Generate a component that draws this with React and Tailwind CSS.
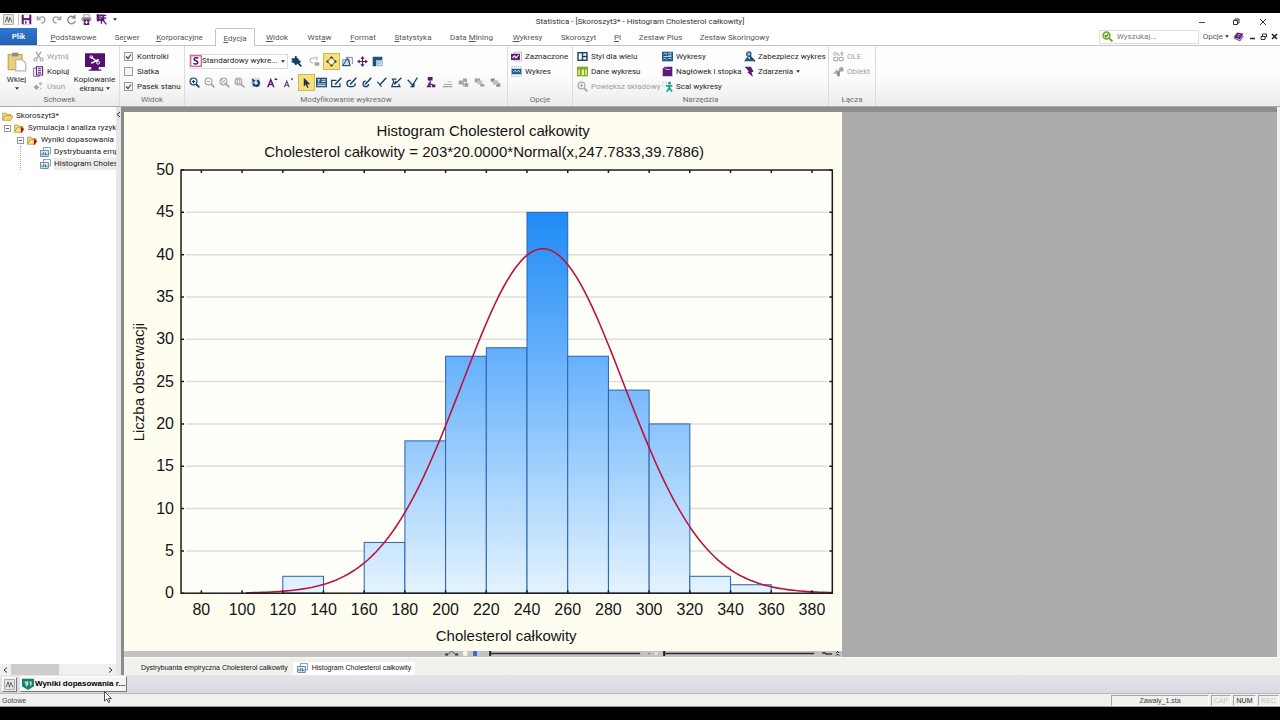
import React from "react";

/* ---------- icons ---------- */

const NAVY = "#123f66";
const PURPLE = "#5b1a73";
const GREY = "#a3a3a3";

function Icon({ children, className = "size-3" }) {
  return (
    <svg viewBox="0 0 16 16" fill="none" className={`${className} shrink-0`} aria-hidden="true">
      {children}
    </svg>
  );
}

const AppIcon = (p) => (
  <Icon {...p}>
    <rect x="1" y="1" width="14" height="14" fill="#e9e9e9" stroke="#8b8b8b" />
    <path d="M3 12L6 4l2 8M8 12l2-7 2 4 1 3" stroke="#555" strokeWidth="1.3" />
  </Icon>
);
const SaveIcon = (p) => (
  <Icon {...p}>
    <path d="M1 1h14v14H1z" fill={PURPLE} />
    <path d="M4 1h8v5H4z" fill="#fff" />
    <path d="M4 9h8v6H4z" fill="#fff" />
    <path d="M6 10h2v4H6z" fill={PURPLE} />
  </Icon>
);
const UndoIcon = (p) => (
  <Icon {...p}>
    <path d="M2 3v5h5M2.500 7.500C5 3 13 3 13 8.500c0 3-3 4.500-5 5" stroke={GREY} strokeWidth="2" />
  </Icon>
);
const RedoIcon = (p) => (
  <Icon {...p}>
    <path d="M14 3v5H9M13.500 7.500C11 3 3 3 3 8.500c0 3 3 4.500 5 5" stroke={GREY} strokeWidth="2" />
  </Icon>
);
const RefreshIcon = (p) => (
  <Icon {...p}>
    <path d="M12.500 5.500A5.500 5.500 0 1 0 13.500 10M13 1v5H8" stroke="#8b8b8b" strokeWidth="2" />
  </Icon>
);
const PrintAddIcon = (p) => (
  <Icon {...p}>
    <path d="M4 1h8v4H4z" stroke={GREY} strokeWidth="1.500" />
    <path d="M1 5h14v5H1z" fill="#9a8aa0" />
    <path d="M4 8h8v8H4z" fill={PURPLE} />
    <path d="M8 9.500v5M5.500 12h5" stroke="#fff" strokeWidth="1.500" />
  </Icon>
);
const SelectDocIcon = (p) => (
  <Icon {...p}>
    <path d="M1 1h11v9H1z" fill={PURPLE} />
    <path d="M8 6l7 9M8 6v8M8 6h7M1 2h14M3 0v11" stroke={PURPLE} strokeWidth="2" />
    <path d="M5 4h5M5 6.500h2" stroke="#fff" />
  </Icon>
);
const PasteIcon = (p) => (
  <Icon {...p}>
    <path d="M1 2h11v12H1z" fill="#e9cf7c" stroke="#c9a94e" />
    <path d="M4 .500h5v3H4z" fill="#8d8d8d" />
    <path d="M7 6h5l3 3v6H7z" fill="#fff" stroke="#b5b5b5" />
  </Icon>
);
const CutIcon = (p) => (
  <Icon {...p}>
    <path d="M4 1l7 10M12 1L5 11" stroke={GREY} strokeWidth="1.800" />
    <circle cx="3.500" cy="12.500" r="2.200" stroke={GREY} strokeWidth="1.500" />
    <circle cx="12.500" cy="12.500" r="2.200" stroke={GREY} strokeWidth="1.500" />
  </Icon>
);
const CopyIcon = (p) => (
  <Icon {...p}>
    <path d="M1 3h8v12H1z" fill="#fff" stroke={PURPLE} />
    <path d="M5 1h9v12H5z" fill="#fff" stroke={PURPLE} strokeWidth="1.500" />
    <path d="M7 4h5M7 7h5M7 10h5" stroke={PURPLE} strokeWidth="1.500" />
  </Icon>
);
const DeleteIcon = (p) => (
  <Icon {...p}>
    <path d="M5 5l4 4-4 4-4-4z" fill={GREY} />
    <path d="M11 1l3 3-3 3-3-3z" fill="#bdbdbd" />
    <path d="M10 10l2 2M12 10l-2 2" stroke={GREY} />
  </Icon>
);
const ScreenIcon = (p) => (
  <Icon {...p}>
    <path d="M0 1h16v11H0z" fill="#571070" />
    <path d="M5 12h6v2h2v1H3v-1h2z" fill="#571070" />
    <path d="M5 4l5 4M5 9l6-3" stroke="#fff" strokeWidth="1.200" />
    <circle cx="5" cy="4" r="1" stroke="#fff" strokeWidth="0.800" />
    <circle cx="10.500" cy="8.500" r="1.200" stroke="#fff" strokeWidth="0.800" />
  </Icon>
);
const StyleSIcon = (p) => (
  <Icon {...p}>
    <rect x="1" y="1" width="14" height="14" fill="#fff" stroke="#d0457c" strokeWidth="1.500" />
    <path d="M11 4.500C9 3 5 3.500 5.500 6c.4 2 5 1.500 5 4 0 2.500-4 2.700-6 1" stroke="#3a1d8a" strokeWidth="2" />
  </Icon>
);
const BrushIcon = (p) => (
  <Icon {...p}>
    <circle cx="7" cy="7" r="4.500" fill={NAVY} />
    <path d="M1 4l12 6M7 0v13M1 8h13M9 9l6 6" stroke={NAVY} strokeWidth="2.600" />
  </Icon>
);
const RotateGreyIcon = (p) => (
  <Icon {...p}>
    <path d="M10 3H5a3 3 0 0 0 0 7h1M10 1l3 2.500L10 6" stroke={GREY} strokeWidth="1.400" />
    <rect x="8" y="9" width="7" height="5" rx="1" fill={GREY} />
  </Icon>
);
const FitIcon = (p) => (
  <Icon {...p}>
    <circle cx="8" cy="8" r="4.500" fill="#fff8cf" stroke="#6d6740" strokeWidth="1.400" />
    <path d="M8 0l2.500 3h-5zM8 16l2.500-3h-5zM0 8l3-2.500v5zM16 8l-3-2.500v5z" fill="#3b3b2b" />
  </Icon>
);
const ShapeIcon = (p) => (
  <Icon {...p}>
    <path d="M5 2h10v10" stroke="#5d7a94" strokeWidth="1.300" />
    <path d="M1 5h10v9H1z" fill="#cfd9e3" stroke="#5d7a94" />
    <path d="M1 14L8 3l4 11z" stroke={NAVY} strokeWidth="1.400" />
  </Icon>
);
const MoveIcon = (p) => (
  <Icon {...p}>
    <path d="M8 2v12M2 8h12" stroke={PURPLE} strokeWidth="1.800" />
    <path d="M8 0l3 4H5zM8 16l3-4H5zM0 8l4-3v6zM16 8l-4-3v6z" fill={PURPLE} />
  </Icon>
);
const LayoutIcon = (p) => (
  <Icon {...p}>
    <path d="M1 1h14v5H6v9H1z" fill="#1d527a" />
    <path d="M7 7h8v7H7z" fill="#d6e2ee" stroke="#7b93ab" />
    <path d="M8 9l2 3 4-4" stroke="#7b93ab" />
  </Icon>
);
function ZoomGlyph({ color, inner, ...p }) {
  return (
    <Icon {...p}>
      <circle cx="6.500" cy="6.500" r="5" stroke={color} strokeWidth="1.600" />
      <path d="M10 10l5 5" stroke={color} strokeWidth="2.400" />
      <path d={inner} stroke={color} strokeWidth="1.500" />
    </Icon>
  );
}
const ZoomInIcon = (p) => <ZoomGlyph color={NAVY} inner="M6.500 4v5M4 6.500h5" {...p} />;
const ZoomOutIcon = (p) => <ZoomGlyph color={GREY} inner="M4 6.500h5" {...p} />;
const ZoomFitIcon = (p) => <ZoomGlyph color={GREY} inner="M4 5.500V4h1.500M7.500 9H9V7.500M4 9l5-5" {...p} />;
const ZoomPageIcon = (p) => <ZoomGlyph color={GREY} inner="M4.500 4h4v5h-4z" {...p} />;
const ZoomPlusGreyIcon = (p) => <ZoomGlyph color={GREY} inner="M6.500 4v5M4 6.500h5" {...p} />;
const RotateIcon = (p) => (
  <Icon {...p}>
    <rect x="1" y="1" width="14" height="14" fill="#dce4ea" />
    <path d="M10 5a4 4 0 1 1-5 4" stroke={NAVY} strokeWidth="3" />
    <path d="M3 2l5 3-4 4z" fill={NAVY} />
  </Icon>
);
const FontUpIcon = (p) => (
  <Icon {...p}>
    <path d="M1 15L5.500 4 10 15M3 11h5" stroke={PURPLE} strokeWidth="2.200" />
    <path d="M13 1l2.500 3.500h-5z" fill={PURPLE} />
  </Icon>
);
const FontDownIcon = (p) => (
  <Icon {...p}>
    <path d="M2 15L5.500 6 9 15M3.500 12h4" stroke="#5d4a66" strokeWidth="1.600" />
    <path d="M13 5l2-3h-4z" fill={PURPLE} />
  </Icon>
);
const ArrowIcon = (p) => (
  <Icon {...p}>
    <path d="M4 1v13l3-3 2 5 2-1-2-4.500h4.500z" fill="#23354a" />
  </Icon>
);
const TextBoxIcon = (p) => (
  <Icon {...p}>
    <path d="M0 1h16v14H0z" fill="#1d527a" />
    <path d="M2 4h4M4 4v4M8 4h6M8 6.500h6M2 10h12M2 12.500h12" stroke="#fff" strokeWidth="1.200" />
  </Icon>
);
const PenRectIcon = (p) => (
  <Icon {...p}>
    <path d="M8 5H1v9h12V9" stroke={NAVY} strokeWidth="1.800" />
    <path d="M6 11l9-10" stroke={NAVY} strokeWidth="2.200" />
  </Icon>
);
const PenRoundIcon = (p) => (
  <Icon {...p}>
    <path d="M7 5H5c-5 1-5 9 1 9h3c4 0 5-3 4-5" stroke={NAVY} strokeWidth="1.800" />
    <path d="M6 11l9-10" stroke={NAVY} strokeWidth="2.200" />
  </Icon>
);
const PenCircleIcon = (p) => (
  <Icon {...p}>
    <path d="M7 6a4 4 0 1 0 4 4" stroke={NAVY} strokeWidth="1.800" />
    <path d="M6 11l9-10" stroke={NAVY} strokeWidth="2.200" />
  </Icon>
);
const PenLineIcon = (p) => (
  <Icon {...p}>
    <path d="M2 7l6 7" stroke={NAVY} strokeWidth="1.800" />
    <path d="M6 11l9-10" stroke={NAVY} strokeWidth="2" />
  </Icon>
);
const PenPolyIcon = (p) => (
  <Icon {...p}>
    <path d="M8 3L2 3l2 4-3 7h12l-2-4" stroke={NAVY} strokeWidth="1.700" />
    <path d="M6 10l9-9M5 11l2-5" stroke={NAVY} strokeWidth="2" />
  </Icon>
);
const PenArrowIcon = (p) => (
  <Icon {...p}>
    <path d="M1 4l7 8 7-11" stroke={NAVY} strokeWidth="1.800" />
    <path d="M4 15h7V9z" fill={NAVY} />
  </Icon>
);
const NodeIcon = (p) => (
  <Icon {...p}>
    <path d="M4 0h7v5H4zM2 15l3-5h2l2 5zM10 11h5v4h-5z" fill={PURPLE} />
    <path d="M7.500 5v5M5 9l7 3" stroke={PURPLE} strokeWidth="1.800" />
  </Icon>
);
const AlignGreyIcon = (p) => (
  <Icon {...p}>
    <path d="M1 14h14M3 11h12" stroke={GREY} strokeWidth="1.600" />
    <path d="M8 6h6v2H8z" fill="#cfcfcf" />
  </Icon>
);
const GroupGreyIcon = (p) => (
  <Icon {...p}>
    <path d="M1 5h6v6H1zM8 2h5v5H8zM9 9h6v5H9z" fill={GREY} />
    <path d="M8 2v12M12 5v9" stroke="#8b8b8b" />
  </Icon>
);
const FrontGreyIcon = (p) => (
  <Icon {...p}>
    <path d="M1 2h8v6H1z" fill={GREY} />
    <path d="M5 5h7v6H5z" fill="#c4c4c4" />
    <path d="M9 10h6v4H9z" fill={GREY} />
  </Icon>
);
const BackGreyIcon = (p) => (
  <Icon {...p}>
    <path d="M1 2h6v5H1zM9 9h6v5H9z" fill="#8f8f8f" />
    <path d="M4 5h8v6H4z" fill="#bcbcbc" />
  </Icon>
);
const SelectedIcon = (p) => (
  <Icon {...p}>
    <rect x="4.500" y="1.500" width="11" height="13" stroke="#b79ac4" />
    <path d="M0 4h13v9H0z" fill={PURPLE} />
    <path d="M2 10l3-3 2 3 4-4" stroke="#fff" strokeWidth="1.600" />
  </Icon>
);
const GraphAllIcon = (p) => (
  <Icon {...p}>
    <rect x="1" y="1" width="14" height="14" stroke="#8aa8c0" strokeDasharray="2 1" />
    <path d="M1 4h14v8H1z" fill="#205b86" />
    <path d="M3 9l3-3 2 3 3-3 2 3" stroke="#fff" />
  </Icon>
);
const MultiStyleIcon = (p) => (
  <Icon {...p}>
    <rect x="1.500" y="2.500" width="13" height="11" fill="#fff" stroke={NAVY} strokeWidth="2" />
    <path d="M8 2v12M8 8h7" stroke={NAVY} strokeWidth="2" />
  </Icon>
);
const DataIcon = (p) => (
  <Icon {...p}>
    <path d="M0 1h16v14H0z" fill="#83ac1c" />
    <path d="M2 5h2v8H2zM7 5h3v8H7zM12 5h2v8h-2z" fill="#eef5d4" />
  </Icon>
);
const GraphsIcon = (p) => (
  <Icon {...p}>
    <path d="M0 1h16v14H0z" fill="#205b86" />
    <path d="M2 5l2-2 2 2 1-2M9 3h5M9 6h5M2 8h12M9 11h5M2 12l2-2 3 3" stroke="#dbe8f2" strokeWidth="1.200" />
  </Icon>
);
const HeaderIcon = (p) => (
  <Icon {...p}>
    <path d="M4 1h11v14H1V4z" fill={PURPLE} />
    <path d="M4 4l2-2M5 5h7" stroke="#fff" />
  </Icon>
);
const MergeIcon = (p) => (
  <Icon {...p}>
    <rect x=".500" y="1.500" width="6" height="6" stroke="#9fb8c8" strokeDasharray="1 1" />
    <circle cx="11" cy="3" r="2.200" fill="#1ea08a" />
    <path d="M6 7h9M10.500 6v4l-3.500 5.500M10.500 9l4 6.500" stroke="#1ea08a" strokeWidth="2.400" />
  </Icon>
);
const LockIcon = (p) => (
  <Icon {...p}>
    <circle cx="7" cy="4.500" r="3.200" fill="#9cb8d2" stroke="#205b86" strokeWidth="1.800" />
    <path d="M0 15l5-7 3 4 1-3 5 6z" fill="#205b86" />
    <path d="M8 7l8 8" stroke={NAVY} strokeWidth="2.400" />
  </Icon>
);
const EventIcon = (p) => (
  <Icon {...p}>
    <path d="M1 1h9l4 7-3 1 2 7-8-7 2-1z" fill={PURPLE} />
  </Icon>
);
const OleIcon = (p) => (
  <Icon {...p}>
    <circle cx="3" cy="4" r="2" stroke={GREY} strokeWidth="1.300" />
    <path d="M7 2v4h3M15 2h-3v4h3M12 4h3" stroke={GREY} strokeWidth="1.300" />
    <rect x="1" y="9" width="6" height="5" rx="2" stroke={GREY} strokeWidth="1.500" />
    <rect x="9" y="9" width="6" height="5" rx="2" stroke={GREY} strokeWidth="1.500" />
  </Icon>
);
const ObjectIcon = (p) => (
  <Icon {...p}>
    <path d="M0 11l6-7 3 9z" fill="#b7b7b7" />
    <circle cx="12" cy="5" r="3.500" fill={GREY} />
    <path d="M6 7h4v8H6z" fill="#8f8f8f" />
  </Icon>
);
const SearchIcon = (p) => (
  <Icon {...p}>
    <circle cx="6.500" cy="6.500" r="5" fill="#dfeec0" stroke="#74a51c" strokeWidth="2.200" />
    <path d="M10 10l5 5" stroke="#74a51c" strokeWidth="3" />
    <path d="M4 6l2 2.500L9.500 4" stroke="#4c7a10" strokeWidth="1.600" />
  </Icon>
);
const BookIcon = (p) => (
  <Icon {...p}>
    <path d="M6 2l9 2-5 8-9-3z" fill={PURPLE} />
    <path d="M1 10l9 4 5-7" stroke="#8a63a0" strokeWidth="1.800" />
    <path d="M7 5l4 1M6 7l3 1" stroke="#e4cdef" />
  </Icon>
);
const FolderIcon = (p) => (
  <Icon {...p}>
    <path d="M1 13V3h5l1 2h6v2" fill="#f6dd8d" stroke="#a98a2c" />
    <path d="M1 13.500L4 7h11.500L13 13.500z" fill="#fbd96b" stroke="#a98a2c" />
  </Icon>
);
const FolderRedIcon = (p) => (
  <Icon {...p}>
    <path d="M1 13V3h5l1 2h6v2" fill="#f6dd8d" stroke="#a98a2c" />
    <path d="M1 13.500L4 7h9L12 13.500z" fill="#fbe38f" stroke="#a98a2c" />
    <path d="M10 5l5 4-5 6z" fill="#b3121d" />
  </Icon>
);
const ChartDocIcon = (p) => (
  <Icon {...p}>
    <rect x="5" y="1" width="10" height="9" fill="#fff" stroke="#4d7896" />
    <rect x="1" y="5" width="11" height="9" fill="#e2edf5" stroke="#33627f" />
    <path d="M3 12V9M5.500 12V7M8 12V8M10 12v-2" stroke="#33627f" strokeWidth="1.400" />
  </Icon>
);
const ShieldIcon = (p) => (
  <Icon {...p}>
    <path d="M0 1h16v10l-8 5-8-5z" fill="#17806c" />
    <path d="M3 5l5-1 1 4-3 4zM10 4l3 1v4l-2 2z" fill="#a9dccf" />
  </Icon>
);

/* ---------- ribbon ---------- */

const Caret = () => (
  <svg viewBox="0 0 5 3" className="w-1 h-[3px] shrink-0" aria-hidden="true">
    <path d="M0 0h5L2.500 3z" fill="#333" />
  </svg>
);

const TABS = [
  ["", "P", "odstawowe", "w-[73px]"],
  ["Se", "r", "wer", "w-[34px]"],
  ["", "K", "orporacyjne", "w-[71px]"],
  ["", "E", "dycja", "w-[40px]", true],
  ["", "W", "idok", "w-[44px]"],
  ["Wst", "a", "w", "w-[41px]"],
  ["", "F", "ormat", "w-[46px]"],
  ["", "S", "tatystyka", "w-[54px]"],
  ["Data ", "M", "ining", "w-[63px]"],
  ["", "W", "ykresy", "w-[49px]"],
  ["Skoros", "z", "yt", "w-[53px]"],
  ["", "P", "I", "w-[25px]"],
  ["Zestaw Plus", "", "", "w-[61px]"],
  ["Zestaw Skoringowy", "", "", "w-[87px]"],
];

function Tool({ icon: I, label, muted, caret, size = "size-3" }) {
  return (
    <button
      type="button"
      disabled={muted}
      className={`flex h-[15px] items-center gap-[3px] whitespace-nowrap ${muted ? "text-[#9f9f9f]" : "text-[#262626]"}`}
    >
      <I className={size} />
      <span>{label}</span>
      {caret && <Caret />}
    </button>
  );
}

function Group({ label, width, children }) {
  return (
    <section
      aria-label={label}
      className={`flex shrink-0 flex-col border-r border-[#dcdcdc] pt-[3px] ${width}`}
    >
      <div className="flex h-[45px]">{children}</div>
      <div className="h-3 text-center leading-3 text-[#6d6d6d]">{label}</div>
    </section>
  );
}

function IconButton({ icon: I, name, active, className = "w-[15px]", muted }) {
  return (
    <button
      type="button"
      aria-label={name}
      disabled={muted}
      className={`flex h-[15px] shrink-0 items-center justify-center ${active ? "bg-[#f6e17c] outline outline-1 outline-[#cdb84c]" : ""} ${className}`}
    >
      <I className="size-[11px]" />
    </button>
  );
}

function Check({ label, on }) {
  return (
    <label className="flex h-[15px] items-center gap-1 whitespace-nowrap text-[#262626]">
      <span className="grid">
        <input
          type="checkbox"
          defaultChecked={on}
          className="peer col-start-1 row-start-1 size-[9px] appearance-none border border-[#9b9b9b] bg-[#f6f6f6]"
        />
        <svg
          viewBox="0 0 9 9"
          fill="none"
          className="pointer-events-none invisible col-start-1 row-start-1 size-[9px] peer-checked:visible"
          aria-hidden="true"
        >
          <path d="M2 4.500L4 6.500 7 2.500" stroke="#444" strokeWidth="1.200" />
        </svg>
      </span>
      {label}
    </label>
  );
}

function TitleBar() {
  const quick = [
    [SaveIcon, "Zapisz"],
    [UndoIcon, "Cofnij"],
    [RedoIcon, "Ponów"],
    [RefreshIcon, "Odśwież"],
    [PrintAddIcon, "Drukuj"],
    [SelectDocIcon, "Zaznacz"],
  ];
  return (
    <header className="grid h-[15px] shrink-0 grid-cols-[1fr_auto_1fr] items-center bg-white">
      <div className="flex items-center pb-[2px] pl-[3px]">
        <AppIcon className="size-[11px]" />
        <div className="ml-[4px] flex items-center border-l border-[#bbb]">
          {quick.map(([I, name]) => (
            <button key={name} type="button" aria-label={name} className="flex w-[15px] justify-center">
              <I className="size-[11px]" />
            </button>
          ))}
        </div>
        <button type="button" aria-label="Dostosuj pasek" className="ml-1 flex">
          <Caret />
        </button>
      </div>
      <h1 className="whitespace-nowrap pt-[3px] text-[#333]">
        Statistica - [Skoroszyt3* - Histogram Cholesterol całkowity]
      </h1>
      <div className="flex items-center justify-end gap-[19px] pr-[13px] pt-[3px]">
        <button type="button" aria-label="Minimalizuj">
          <svg viewBox="0 0 8 8" fill="none" className="size-2">
            <path d="M1 4.500h6" stroke="#444" />
          </svg>
        </button>
        <button type="button" aria-label="Przywróć" className="ml-[7px]">
          <svg viewBox="0 0 8 8" fill="none" className="size-2">
            <path d="M1.500 2.500h4v4h-4zM3 2V1h4v4H6" stroke="#333" />
          </svg>
        </button>
        <button type="button" aria-label="Zamknij">
          <svg viewBox="0 0 8 8" fill="none" className="size-2">
            <path d="M1 1l6 6M7 1L1 7" stroke="#333" />
          </svg>
        </button>
      </div>
    </header>
  );
}

function TabBar() {
  return (
    <nav className="flex h-[18px] shrink-0 items-stretch border-b border-[#c4c4c4] bg-white text-[#555]">
      <button type="button" className="w-[37px] shrink-0 bg-linear-to-b from-[#2f78cf] to-[#2161b4] font-semibold text-white">
        Plik
      </button>
      {TABS.map(([a, u, b, w, active]) => (
        <button
          key={a + u + b}
          type="button"
          className={`shrink-0 whitespace-nowrap pt-[2px] ${w} ${active ? "-mb-px rounded-t-xs border border-b-0 border-[#c4c4c4] bg-white" : ""}`}
        >
          {a}
          <u>{u}</u>
          {b}
        </button>
      ))}
      <div className="ml-auto flex items-center gap-1 pr-[2px]">
        <label className="flex h-[14px] w-[100px] items-center gap-1 border border-[#dedede] pl-[2px]">
          <SearchIcon className="size-[11px]" />
          <input
            type="search"
            aria-label="Wyszukaj"
            placeholder="Wyszukaj..."
            className="w-full min-w-0 outline-none placeholder:text-[#7a7a7a]"
          />
        </label>
        <button type="button" className="flex items-center gap-[2px]">
          Opcje <Caret />
        </button>
        <button type="button" aria-label="Pomoc">
          <BookIcon className="size-[11px]" />
        </button>
        <button type="button" aria-label="Minimalizuj dokument" className="ml-[1px]">
          <svg viewBox="0 0 7 7" fill="none" className="size-[7px]">
            <path d="M1 5.500h5" stroke="#222" strokeWidth="1.500" />
          </svg>
        </button>
        <button type="button" aria-label="Przywróć dokument">
          <svg viewBox="0 0 7 7" fill="none" className="size-[7px]">
            <path d="M1 3.500h4v3H1zM2.500 3V1h4v3H5" stroke="#333" />
          </svg>
        </button>
        <button type="button" aria-label="Zamknij dokument">
          <svg viewBox="0 0 7 7" fill="none" className="size-[7px]">
            <path d="M1 1l5 5M6 1L1 6" stroke="#222" strokeWidth="1.600" />
          </svg>
        </button>
      </div>
    </nav>
  );
}

function Ribbon() {
  return (
    <div className="flex h-[61px] shrink-0 border-b border-[#a9a9a9] bg-linear-to-b from-white via-[#fcfcfc] to-[#ececec]">
      <Group label="Schowek" width="w-[120px]">
        <button type="button" className="flex w-[33px] flex-col items-center gap-[3px] pt-[3px] text-[#262626]">
          <PasteIcon className="size-[20px]" />
          <span className="leading-[9px]">Wklej</span>
          <Caret />
        </button>
        <div className="flex w-[38px] flex-col">
          <Tool icon={CutIcon} label="Wytnij" muted size="size-[11px]" />
          <Tool icon={CopyIcon} label="Kopiuj" size="size-[11px]" />
          <Tool icon={DeleteIcon} label="Usuń" muted size="size-[11px]" />
        </div>
        <button type="button" className="flex w-[47px] flex-col items-center gap-[3px] pt-[3px] text-[#262626]">
          <ScreenIcon className="size-[20px]" />
          <span className="whitespace-nowrap leading-[9px]">
            Kopiowanie
            <span className="flex items-center justify-center gap-[2px]">
              ekranu <Caret />
            </span>
          </span>
        </button>
      </Group>

      <Group label="Widok" width="w-[65px]">
        <div className="flex flex-col pl-1">
          <Check label="Kontrolki" on />
          <Check label="Siatka" />
          <Check label="Pasek stanu" on />
        </div>
      </Group>

      <Group label="Modyfikowanie wykresów" width="w-[323px]">
        <div className="flex flex-col pl-[2px]">
          <div className="flex h-6 items-center pl-[2px]">
            <label className="flex h-[15px] w-[99px] items-center border border-[#dcdcdc] bg-white pr-[2px]">
              <StyleSIcon className="size-[12px]" />
              <select
                aria-label="Styl wykresu"
                className="min-w-0 flex-1 appearance-none whitespace-nowrap text-[#262626] outline-none"
              >
                <option>Standardowy wykre...</option>
              </select>
              <Caret />
            </label>
            <IconButton icon={BrushIcon} name="Formatuj" className="w-[17px]" />
            <IconButton icon={RotateGreyIcon} name="Obróć" className="w-[19px]" muted />
            <IconButton icon={FitIcon} name="Dopasuj" active />
            <IconButton icon={ShapeIcon} name="Obszar" className="w-4" />
            <IconButton icon={MoveIcon} name="Przesuń" />
            <IconButton icon={LayoutIcon} name="Układ" />
          </div>
          <div className="flex h-[19px] items-center">
            <IconButton icon={ZoomInIcon} name="Powiększ" />
            <IconButton icon={ZoomOutIcon} name="Pomniejsz" muted />
            <IconButton icon={ZoomFitIcon} name="Dopasuj powiększenie" muted />
            <IconButton icon={ZoomPageIcon} name="Cała strona" muted />
            <IconButton icon={RotateIcon} name="Obrót" className="w-[17px]" />
            <IconButton icon={FontUpIcon} name="Większa czcionka" className="w-4" />
            <IconButton icon={FontDownIcon} name="Mniejsza czcionka" className="mr-[3px] w-4" />
            <IconButton icon={ArrowIcon} name="Wskaźnik" active />
            <IconButton icon={TextBoxIcon} name="Tekst" />
            <IconButton icon={PenRectIcon} name="Prostokąt" />
            <IconButton icon={PenRoundIcon} name="Zaokrąglony" />
            <IconButton icon={PenCircleIcon} name="Elipsa" />
            <IconButton icon={PenLineIcon} name="Linia" />
            <IconButton icon={PenPolyIcon} name="Wielokąt" />
            <IconButton icon={PenArrowIcon} name="Strzałka" className="mr-[2px] w-4" />
            <IconButton icon={NodeIcon} name="Węzły" className="mr-px w-4" />
            <IconButton icon={AlignGreyIcon} name="Wyrównaj" className="w-4" muted />
            <IconButton icon={GroupGreyIcon} name="Grupuj" className="w-4" muted />
            <IconButton icon={FrontGreyIcon} name="Na wierzch" className="w-4" muted />
            <IconButton icon={BackGreyIcon} name="Na spód" className="w-4" muted />
          </div>
        </div>
      </Group>

      <Group label="Opcje" width="w-[65px]">
        <div className="flex flex-col pl-[3px]">
          <Tool icon={SelectedIcon} label="Zaznaczone" size="size-[11px]" />
          <Tool icon={GraphAllIcon} label="Wykres" size="size-[11px]" />
        </div>
      </Group>

      <Group label="Narzędzia" width="w-[256px]">
        <div className="flex w-[85px] flex-col pl-1">
          <Tool icon={MultiStyleIcon} label="Styl dla wielu" size="size-[11px]" />
          <Tool icon={DataIcon} label="Dane wykresu" size="size-[11px]" />
          <Tool icon={ZoomPlusGreyIcon} label="Powiększ składowy" muted size="size-[11px]" />
        </div>
        <div className="flex w-[82px] flex-col pl-1">
          <Tool icon={GraphsIcon} label="Wykresy" size="size-[11px]" />
          <Tool icon={HeaderIcon} label="Nagłówek i stopka" size="size-[11px]" />
          <Tool icon={MergeIcon} label="Scal wykresy" size="size-[11px]" />
        </div>
        <div className="flex flex-col pl-1">
          <Tool icon={LockIcon} label="Zabezpiecz wykres" size="size-[11px]" />
          <Tool icon={EventIcon} label="Zdarzenia" caret size="size-[11px]" />
        </div>
      </Group>

      <Group label="Łącza" width="w-[47px]">
        <div className="flex flex-col pl-1">
          <Tool icon={OleIcon} label="OLE" muted size="size-[11px]" />
          <Tool icon={ObjectIcon} label="Obiekt" muted size="size-[11px]" />
        </div>
      </Group>
    </div>
  );
}

/* ---------- workbook tree ---------- */

function TreeRow({ icon: I, label, box, selected }) {
  return (
    <div className="flex h-3 items-center whitespace-nowrap">
      {box && (
        <span className="mr-[3px] grid size-[7px] shrink-0 place-items-center border border-[#9a9a9a] bg-white">
          <span className="h-px w-[3px] bg-[#555]" />
        </span>
      )}
      <I className="size-[11px]" />
      <span className={`ml-[3px] leading-3 ${selected ? "flex-1 bg-[#ececec]" : ""}`}>{label}</span>
    </div>
  );
}

function Tree() {
  return (
    <aside className="flex w-[121px] shrink-0 bg-white text-[#222]">
      <div className="flex min-w-0 flex-1 flex-col">
        <ul className="flex-1 pt-[3px]">
          <li className="pl-[2px]">
            <TreeRow icon={FolderIcon} label="Skoroszyt3*" />
            <ul>
              <li className="pl-[2px]">
                <TreeRow icon={FolderRedIcon} label="Symulacja i analiza ryzyk" box />
                <ul className="pl-[13px]">
                  <li>
                    <TreeRow icon={FolderRedIcon} label="Wyniki dopasowania" box />
                    <ul className="ml-[3px] border-l border-dotted border-[#aaa] pl-[19px]">
                      <li>
                        <TreeRow icon={ChartDocIcon} label="Dystrybuanta emp" />
                      </li>
                      <li>
                        <TreeRow icon={ChartDocIcon} label="Histogram Choles" selected />
                      </li>
                    </ul>
                  </li>
                </ul>
              </li>
            </ul>
          </li>
        </ul>
        <div className="flex h-[11px] items-stretch bg-[#f0f0f0]">
          <button type="button" aria-label="Przewiń w lewo" className="flex w-[11px] items-center justify-center">
            <svg viewBox="0 0 5 6" fill="none" className="h-[6px] w-[5px]">
              <path d="M4 .500L1 3l3 2.500" stroke="#333" />
            </svg>
          </button>
          <span className="w-[48px] bg-[#cdcdcd]" />
          <button type="button" aria-label="Przewiń w prawo" className="ml-auto flex w-[11px] items-center justify-center">
            <svg viewBox="0 0 5 6" fill="none" className="h-[6px] w-[5px]">
              <path d="M1 .500L4 3 1 5.500" stroke="#333" />
            </svg>
          </button>
        </div>
      </div>
      <div className="w-[5px] bg-[#e6e6e6] pt-1">
        <button type="button" aria-label="Zwiń drzewo" className="flex">
          <svg viewBox="0 0 5 7" fill="none" className="h-[7px] w-[5px]">
            <path d="M4 1L1 3.500 4 6" stroke="#222" />
          </svg>
        </button>
      </div>
    </aside>
  );
}

/* ---------- histogram ---------- */

const PLOT = { left: 57, right: 708, top: 58, bottom: 481 };
const px = (v) => PLOT.left + ((v - 70) / 320) * (PLOT.right - PLOT.left);
const py = (v) => PLOT.bottom - (v / 50) * (PLOT.bottom - PLOT.top);

const BINS = [
  [120, 2],
  [160, 6],
  [180, 18],
  [200, 28],
  [220, 29],
  [240, 45],
  [260, 28],
  [280, 24],
  [300, 20],
  [320, 2],
  [340, 1],
];
const MEAN = 247.7833;
const SD = 39.7886;
const density = (x) =>
  ((203 * 20) / (SD * Math.sqrt(2 * Math.PI))) * Math.exp(-((x - MEAN) ** 2) / (2 * SD * SD));
const CURVE = Array.from({ length: 145 }, (_, i) => 102 + i * 2)
  .map((x, i) => `${i ? "L" : "M"}${px(x).toFixed(2)} ${py(density(x)).toFixed(2)}`)
  .join("");
const X_TICKS = Array.from({ length: 16 }, (_, i) => 80 + i * 20);
const Y_TICKS = Array.from({ length: 11 }, (_, i) => i * 5);

function Histogram() {
  return (
    <svg
      viewBox="0 0 718 539"
      role="img"
      aria-label="Histogram Cholesterol całkowity"
      className="block w-full font-['Liberation_Sans',sans-serif]"
    >
      <defs>
        <linearGradient id="bar" gradientUnits="userSpaceOnUse" x1="0" y1="101" x2="0" y2="481">
          <stop offset="0" stopColor="#1f8bf5" />
          <stop offset="0.4" stopColor="#6bb3fb" />
          <stop offset="1" stopColor="#e3f3ff" />
        </linearGradient>
      </defs>
      <rect width="718" height="539" fill="#fefdf0" />
      <rect x="57" y="58" width="651" height="423" fill="#fffffa" />
      <g stroke="#dcdedc" strokeWidth="1.500">
        {Y_TICKS.slice(1, -1).map((v) => (
          <path key={v} d={`M62 ${py(v)}H703`} />
        ))}
      </g>
      {BINS.map(([x, n]) => (
        <rect
          key={x}
          x={px(x)}
          y={py(n)}
          width={px(x + 20) - px(x)}
          height={PLOT.bottom - py(n)}
          fill="url(#bar)"
          stroke="#2a62ae"
        />
      ))}
      <path d={CURVE} fill="none" stroke="#bb1340" strokeWidth="1.600" />
      <rect x="57" y="58" width="651" height="423" fill="none" stroke="#1c1c1c" strokeWidth="1.500" />
      <g stroke="#1c1c1c" strokeWidth="1.500">
        {X_TICKS.map((v) => (
          <path key={v} d={`M${px(v)} 58v3M${px(v)} 481v-3`} />
        ))}
        {Y_TICKS.map((v) => (
          <path key={v} d={`M57 ${py(v)}h3M708 ${py(v)}h-3`} />
        ))}
      </g>
      <g fill="#151515" fontSize="15">
        <text x="359" y="24" textAnchor="middle">
          Histogram Cholesterol całkowity
        </text>
        <text x="360" y="45" textAnchor="middle">
          Cholesterol całkowity = 203*20.0000*Normal(x,247.7833,39.7886)
        </text>
        <g fontSize="16">
          {Y_TICKS.map((v) => (
            <text key={v} x="50" y={py(v) + 5} textAnchor="end">
              {v}
            </text>
          ))}
          {X_TICKS.map((v) => (
            <text key={v} x={px(v)} y="503" textAnchor="middle">
              {v}
            </text>
          ))}
        </g>
        <text x="382" y="529" textAnchor="middle">
          Cholesterol całkowity
        </text>
        <text x="0" y="0" textAnchor="middle" transform="translate(20 270) rotate(-90)">
          Liczba obserwacji
        </text>
      </g>
    </svg>
  );
}

function GraphStrip() {
  return (
    <svg viewBox="0 1 718 6" fill="none" className="block w-full bg-[#c3c3bf]" aria-hidden="true">
      <path d="M321 4.500h3M331 4.500h3" stroke="#333" strokeWidth="2" />
      <path d="M324 4l3.500-3L331 4" stroke="#555" />
      <circle cx="341" cy="3.500" r="2.500" fill="#f4f4f4" />
      <path d="M349 1h4v5h-4z" fill="#4a64b8" />
      <path d="M353 1h3v5h-3z" fill="#b9c8ea" />
      <path d="M367 3.500h149M541 3.500h149" stroke="#33283a" strokeWidth="1.500" />
      <path d="M366 1v5M540 1v5" stroke="#222" strokeWidth="2" />
      <circle cx="525" cy="3.500" r="1" fill="#888" />
      <circle cx="532" cy="3.500" r="1.500" fill="#e6e6e6" />
      <path d="M698 3h3l1 1h6" stroke="#333" strokeWidth="1.600" />
      <path d="M712 3l1.500-1.500L715 3M712 5.500l1.500-1.500 1.500 1.500" stroke="#111" />
    </svg>
  );
}

function Workspace() {
  return (
    <main className="flex min-w-0 flex-1 flex-col border-l-[3px] border-[#8c8c8c] bg-[#f1f1ee]">
      <div className="mr-[3px] min-h-0 flex-1 overflow-hidden border-t-[5px] border-[#8c8c8c] bg-[#ababab]">
        <div className="w-[62.3%]">
          <Histogram />
          <GraphStrip />
        </div>
      </div>
      <div className="flex h-[18px] items-center border-t border-[#fafafa] pl-[17px] pt-[3px] text-[7px] text-[#111]">
        <button type="button" className="h-full whitespace-nowrap font-['Liberation_Sans',sans-serif]">
          Dystrybuanta empiryczna Cholesterol całkowity
        </button>
        <button
          type="button"
          className="ml-[5px] flex h-[13px] items-center gap-1 whitespace-nowrap bg-white px-1 font-['Liberation_Sans',sans-serif]"
        >
          <ChartDocIcon className="size-[11px]" />
          Histogram Cholesterol całkowity
        </button>
      </div>
    </main>
  );
}

/* ---------- bottom bars ---------- */

function TaskBar() {
  return (
    <div className="relative flex h-[18px] shrink-0 items-center bg-linear-to-b from-[#e6e5ed] to-[#d8d8df] pl-[2px]">
      <button
        type="button"
        aria-label="Statistica"
        className="flex size-[15px] items-center justify-center border border-[#fff] border-r-[#777] border-b-[#777] bg-[#efefec]"
      >
        <AppIcon className="size-[11px]" />
      </button>
      <button
        type="button"
        className="ml-[3px] flex h-4 w-[107px] items-center gap-px whitespace-nowrap border border-white border-r-[#777] border-b-[#777] bg-[#f5f5f3] pl-px font-['Liberation_Sans',sans-serif] text-[8px] font-bold text-black"
      >
        <ShieldIcon className="size-3" />
        Wyniki dopasowania r...
      </button>
      <svg viewBox="0 0 8 12" className="absolute left-[104px] top-4 z-10 h-3 w-2" aria-hidden="true">
        <path d="M.500.500v9.500l2.300-2 1.700 3.500 1.500-.7-1.600-3.300h3z" fill="#fff" stroke="#222" strokeWidth="0.800" />
      </svg>
    </div>
  );
}

function StatusBar() {
  const cell = "flex h-[11px] items-center justify-center border border-[#a5a5a5] border-r-white border-b-white";
  return (
    <footer className="flex h-[14px] shrink-0 items-center justify-between border-t border-[#b7b7bd] border-b border-b-[#9a9a9a] bg-[#f0f0ef] pl-[2px] pt-px font-['Liberation_Sans',sans-serif] text-[7px] text-[#444]">
      <span>Gotowe</span>
      <div className="flex gap-[2px] pr-px">
        <span className={`${cell} w-[98px]`}>Zawały_1.sta</span>
        <span className={`${cell} w-[20px] text-[#c4c4c4]`}>CAP</span>
        <span className={`${cell} w-[23px] text-[#222]`}>NUM</span>
        <span className={`${cell} w-[21px] text-[#c4c4c4]`}>REC</span>
      </div>
    </footer>
  );
}

export default function App() {
  return (
    <div className="flex h-screen flex-col overflow-hidden bg-black py-[13px] font-[Roboto,'Noto_Sans',sans-serif] text-[8px] leading-[12px]">
      <TitleBar />
      <TabBar />
      <Ribbon />
      <div className="flex min-h-0 flex-1">
        <Tree />
        <Workspace />
      </div>
      <TaskBar />
      <StatusBar />
    </div>
  );
}
